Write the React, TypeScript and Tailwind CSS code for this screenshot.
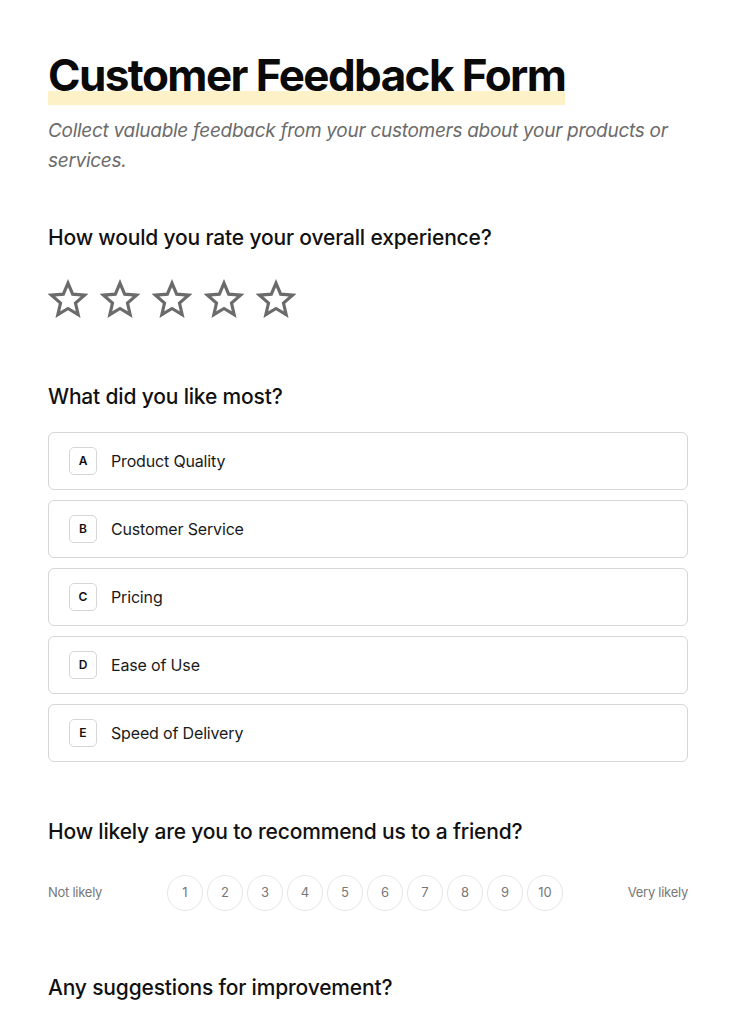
const options = [
  { key: "A", label: "Product Quality" },
  { key: "B", label: "Customer Service" },
  { key: "C", label: "Pricing" },
  { key: "D", label: "Ease of Use" },
  { key: "E", label: "Speed of Delivery" },
];

const Star = () => (
  <svg width="40" height="40" viewBox="0 0 24 24" fill="none" stroke="#6b6b6b" strokeWidth="1.9" strokeLinejoin="miter">
    <path d="M12 2.5l2.8 6.6 7.1.6-5.4 4.7 1.6 7-6.1-3.7-6.1 3.7 1.6-7-5.4-4.7 7.1-.6z" />
  </svg>
);

export default function App() {
  return (
    <div className="min-h-screen bg-white px-12 pt-[47px] pb-10 font-['Inter',sans-serif] text-[#111]">
      <h1 className="inline bg-[linear-gradient(transparent_76%,#fdf1c7_76%)] pb-[3px] text-[44px] font-bold leading-[56px] tracking-[-0.036em] text-[#0a0a0a]">
        Customer Feedback Form
      </h1>
      <p className="mt-[13px] text-[19px] italic leading-[30px] tracking-[-0.015em] text-[#6b6b6b]">
        Collect valuable feedback from your customers about your products or services.
      </p>

      <section className="mt-[46px]">
        <h2 className="text-[21px] font-medium leading-[32px] tracking-[-0.008em]">How would you rate your overall experience?</h2>
        <div className="mt-[25px] flex gap-3">
          {[0, 1, 2, 3, 4].map((i) => (
            <Star key={i} />
          ))}
        </div>
      </section>

      <section className="mt-[62px]">
        <h2 className="text-[21px] font-medium leading-[32px] tracking-[-0.008em]">What did you like most?</h2>
        <div className="mt-[19px] flex flex-col gap-[10px]">
          {options.map((o) => (
            <div key={o.key} className="flex h-[58px] items-center gap-[14px] rounded-md border border-[#d6d6d6] px-5">
              <span className="flex h-7 w-7 items-center justify-center rounded-[5px] border border-[#d6d6d6] text-[12px] font-semibold">
                {o.key}
              </span>
              <span className="text-[16px] tracking-[-0.01em] text-[#1a1a1a]">{o.label}</span>
            </div>
          ))}
        </div>
      </section>

      <section className="mt-[54px]">
        <h2 className="text-[21px] font-medium leading-[32px] tracking-[-0.008em]">How likely are you to recommend us to a friend?</h2>
        <div className="mt-[27px] flex items-center justify-between">
          <span className="text-[13px] tracking-[-0.02em] text-[#777]">Not likely</span>
          <div className="flex gap-1">
            {[1, 2, 3, 4, 5, 6, 7, 8, 9, 10].map((n) => (
              <div key={n} className="flex h-9 w-9 items-center justify-center rounded-full border border-[#e6e6e6] text-[13px] text-[#777]">
                {n}
              </div>
            ))}
          </div>
          <span className="text-[13px] tracking-[-0.02em] text-[#777]">Very likely</span>
        </div>
      </section>

      <section className="mt-[61px]">
        <h2 className="text-[21px] font-medium leading-[32px] tracking-[-0.008em]">Any suggestions for improvement?</h2>
      </section>
    </div>
  );
}
